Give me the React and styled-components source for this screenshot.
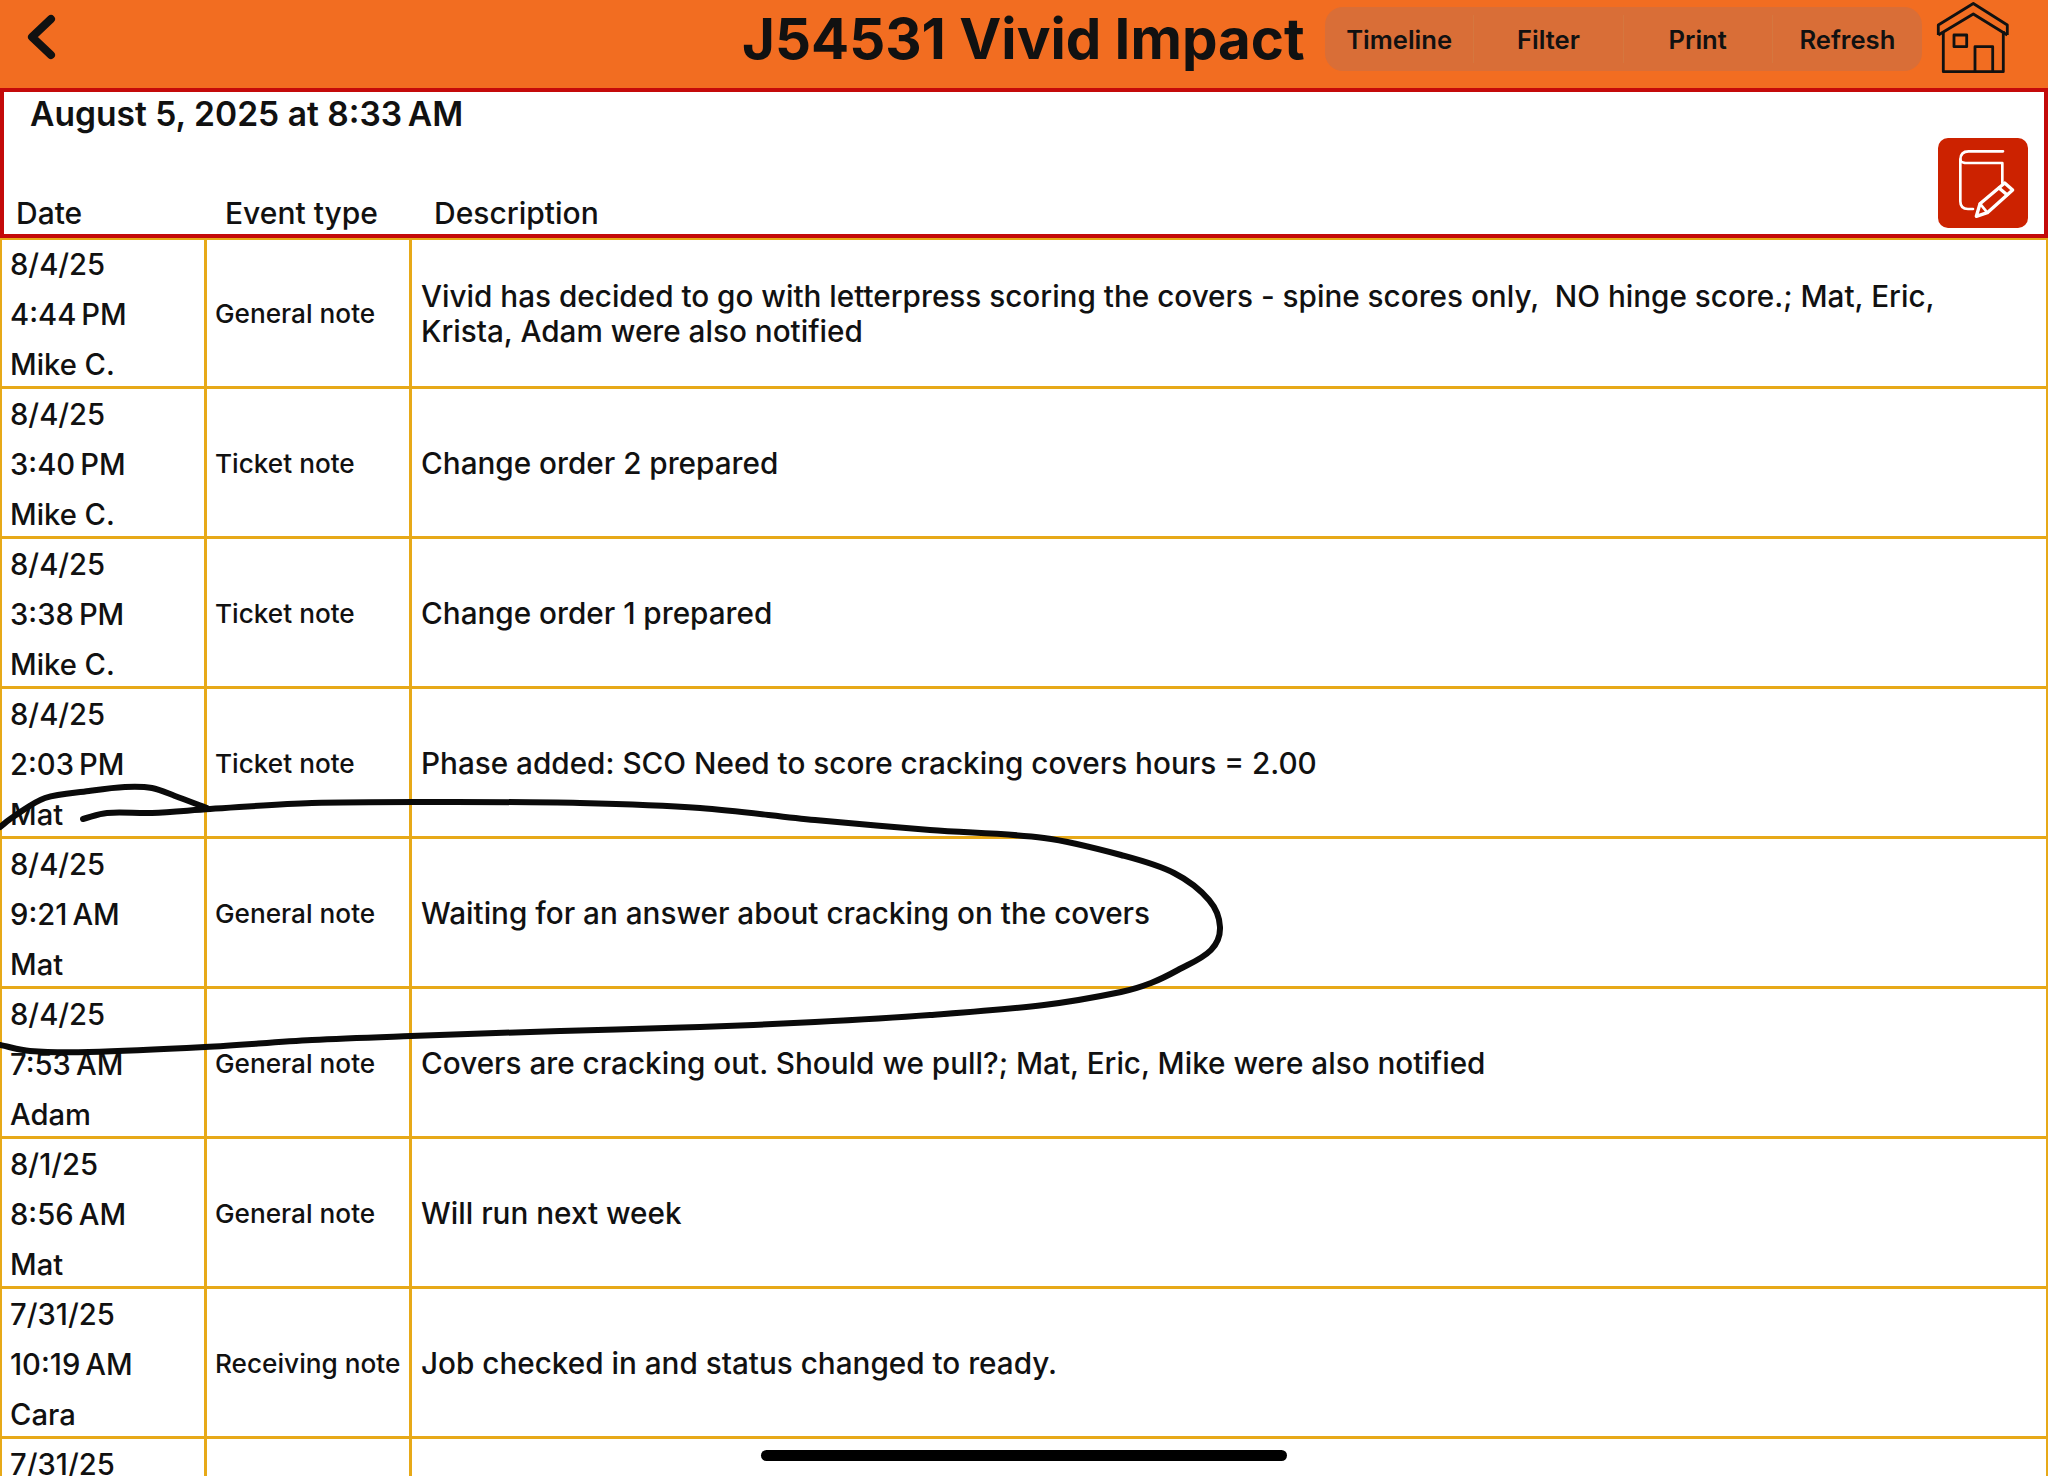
import styled, { createGlobalStyle } from 'styled-components'

const GlobalStyle = createGlobalStyle`
  html, body {
    margin: 0;
    background: #fff;
    color: #111;
    font-family: Inter, "Noto Sans", sans-serif;
  }
`

const rows = [
  { date: '8/4/25', time: '4:44\u202fPM', who: 'Mike C.', type: 'General note', text: 'Vivid has decided to go with letterpress scoring the covers - spine scores only,  NO hinge score.; Mat, Eric, Krista, Adam were also notified' },
  { date: '8/4/25', time: '3:40\u202fPM', who: 'Mike C.', type: 'Ticket note', text: 'Change order 2 prepared' },
  { date: '8/4/25', time: '3:38\u202fPM', who: 'Mike C.', type: 'Ticket note', text: 'Change order 1 prepared' },
  { date: '8/4/25', time: '2:03\u202fPM', who: 'Mat', type: 'Ticket note', text: 'Phase added: SCO Need to score cracking covers hours = 2.00' },
  { date: '8/4/25', time: '9:21\u202fAM', who: 'Mat', type: 'General note', text: 'Waiting for an answer about cracking on the covers' },
  { date: '8/4/25', time: '7:53\u202fAM', who: 'Adam', type: 'General note', text: 'Covers are cracking out. Should we pull?; Mat, Eric, Mike were also notified' },
  { date: '8/1/25', time: '8:56\u202fAM', who: 'Mat', type: 'General note', text: 'Will run next week' },
  { date: '7/31/25', time: '10:19\u202fAM', who: 'Cara', type: 'Receiving note', text: 'Job checked in and status changed to ready.' },
  { date: '7/31/25', time: '', who: '', type: '', text: '' },
]

const loopPoints = [
  [83, 819], [107, 813], [152, 813], [210, 809], [312, 803], [450, 802], [580, 803], [700, 808],
  [815, 820], [930, 830], [1044, 838], [1121, 855], [1174, 873], [1209, 900], [1220, 927],
  [1211, 950], [1178, 970], [1151, 983], [1121, 992], [1044, 1005], [930, 1015], [815, 1022], [700, 1027],
  [560, 1031], [411, 1036], [312, 1040], [205, 1047], [89, 1052], [30, 1051], [0, 1045],
]
const hookPoints = [[0, 827], [13, 817], [45, 798], [89, 791], [125, 787], [152, 788], [175, 796], [207, 808]]

// spline through the traced points, tangents scaled by chord so the pen stroke stays smooth
const smooth = (pts) => {
  const tangent = (a, b, len) => {
    const d = Math.hypot(b[0] - a[0], b[1] - a[1]) || 1
    return [((b[0] - a[0]) / d) * len / 3, ((b[1] - a[1]) / d) * len / 3]
  }
  let d = `M${pts[0][0]} ${pts[0][1]}`
  for (let i = 0; i < pts.length - 1; i++) {
    const p1 = pts[i]
    const p2 = pts[i + 1]
    const len = Math.hypot(p2[0] - p1[0], p2[1] - p1[1])
    const t1 = tangent(pts[i - 1] || p1, p2, len)
    const t2 = tangent(p1, pts[i + 2] || p2, len)
    d += ` C${p1[0] + t1[0]} ${p1[1] + t1[1]} ${p2[0] - t2[0]} ${p2[1] - t2[1]} ${p2[0]} ${p2[1]}`
  }
  return d
}

function HomeIcon() {
  return (
    <HomeSvg viewBox="10 0 76 76" fill="none" stroke="#111" strokeWidth="2.8" strokeLinejoin="round">
      <path d="M13.3 35V25L48.3 3.5L82.3 25V35" />
      <path d="M13.3 35L48.3 14L82.3 35" />
      <path d="M18.3 31V71.7H78.3V31" />
      <rect x="29" y="35" width="12.7" height="11.7" />
      <path d="M50 71.7V46.7H67.7V71.7" />
    </HomeSvg>
  )
}

function EditIcon() {
  return (
    <svg width="90" height="90" viewBox="0 0 270 270" fill="none" stroke="#fff" strokeWidth="8" strokeLinejoin="round" strokeLinecap="round">
      <path d="M195 40H92Q67 40 67 65V190Q67 213 90 213H105" />
      <path d="M67 65Q67 75 92 75H193V135" />
      <path d="M115 235L126 197L200 135L224 156L148 224Z" strokeWidth="10" />
      <path d="M126 197L148 224" />
      <path d="M183 150L207 170" strokeWidth="10" />
    </svg>
  )
}

export default function App() {
  return (
    <Page>
      <GlobalStyle />
      <TopBar>
        <BackIcon viewBox="0 0 30 46" fill="none" stroke="#111" strokeWidth="8" strokeLinecap="round" strokeLinejoin="round">
          <path d="M25 5L6 23L25 41" />
        </BackIcon>
        <Title>J54531 Vivid Impact</Title>
        <Segments>
          <Segment>Timeline</Segment>
          <Segment>Filter</Segment>
          <Segment>Print</Segment>
          <Segment>Refresh</Segment>
        </Segments>
        <HomeIcon />
      </TopBar>
      <SubHeader>
        <HeadLeft>
          <Stamp>August 5, 2025 at 8:33{'\u202f'}AM</Stamp>
          <Columns>
            <span>Date</span>
            <span>Event type</span>
            <span>Description</span>
          </Columns>
        </HeadLeft>
        <EditButton><EditIcon /></EditButton>
      </SubHeader>
      <Table>
        {rows.map((r, i) => (
          <Row key={i}>
            <DateCell>
              <div>{r.date}</div>
              <div>{r.time}</div>
              <div>{r.who}</div>
            </DateCell>
            <TypeCell>{r.type}</TypeCell>
            <TextCell>{r.text}</TextCell>
          </Row>
        ))}
      </Table>
      <Ink viewBox="0 0 2048 1476" fill="none" stroke="#0a0a0a" strokeWidth="6" strokeLinecap="round">
        <path d={smooth(hookPoints)} />
        <path d={smooth(loopPoints)} />
      </Ink>
      <HomeBar />
    </Page>
  )
}

const Page = styled.div`
  position: relative;
  width: 2048px;
  height: 1476px;
  overflow: hidden;
`
const TopBar = styled.header`
  height: 88px;
  background: #f26d21;
  display: flex;
  align-items: center;
`
const BackIcon = styled.svg`
  width: 30px;
  height: 46px;
  margin-left: 26px;
  margin-top: -14px;
`
const Title = styled.h1`
  margin: -11px 0 0 686px;
  width: 561px;
  font-size: 56.4px;
  font-weight: 700;
  white-space: nowrap;
`
const Segments = styled.div`
  display: grid;
  grid-template-columns: repeat(4, 1fr);
  width: 597px;
  height: 64px;
  margin-left: 22px;
  margin-top: -10px;
  background: #d96e37;
  border-radius: 18px;
`
const Segment = styled.div`
  display: flex;
  align-items: center;
  justify-content: center;
  font-size: 25.6px;
  font-weight: 600;
  margin: 8px 0;
  border-right: 1px solid #d5773f;
  &:last-child {
    border-right: none;
  }
`
const HomeSvg = styled.svg`
  width: 76px;
  height: 76px;
  margin-left: 13px;
  margin-top: -12px;
`
const SubHeader = styled.section`
  box-sizing: border-box;
  height: 150px;
  display: flex;
  border: 4px solid #c40a0a;
`
const HeadLeft = styled.div`
  flex: 1;
  display: flex;
  flex-direction: column;
  justify-content: space-between;
`
const Stamp = styled.div`
  margin: 0 0 0 26px;
  font-size: 33.6px;
  line-height: 44px;
  font-weight: 600;
`
const Columns = styled.div`
  display: grid;
  grid-template-columns: 209px 209px 1fr;
  padding: 0 0 1px 12px;
  font-size: 30px;
  line-height: 40px;
  font-weight: 500;
`
const EditButton = styled.button`
  align-self: flex-end;
  width: 90px;
  height: 90px;
  padding: 0;
  margin: 0 16px 6px 0;
  border: none;
  border-radius: 10px;
  background: #cc2200;
`
const Table = styled.main`
  border: solid #e7a918;
  border-width: 2px 2px 0;
`
const Row = styled.div`
  box-sizing: border-box;
  height: 150px;
  display: grid;
  grid-template-columns: 205px 205px 1fr;
  border-bottom: 3px solid #e7a918;
  &:first-child {
    margin-top: -1px;
  }
`
const DateCell = styled.div`
  box-sizing: border-box;
  padding: 1px 0 0 8px;
  border-right: 3px solid #e7a918;
  font-size: 29.2px;
  line-height: 50px;
  font-weight: 500;
`
const TypeCell = styled.div`
  display: flex;
  align-items: center;
  padding: 0 0 3px 8px;
  border-right: 3px solid #e7a918;
  font-size: 26.2px;
  font-weight: 500;
  white-space: nowrap;
`
const TextCell = styled.div`
  align-self: center;
  padding: 0 90px 2px 9px;
  font-size: 29.7px;
  line-height: 35px;
  font-weight: 500;
  white-space: pre-wrap;
`
const Ink = styled.svg`
  position: absolute;
  inset: 0;
  width: 2048px;
  height: 1476px;
  pointer-events: none;
`
const HomeBar = styled.div`
  position: absolute;
  left: 761px;
  top: 1450px;
  width: 526px;
  height: 11px;
  border-radius: 6px;
  background: #000;
`
